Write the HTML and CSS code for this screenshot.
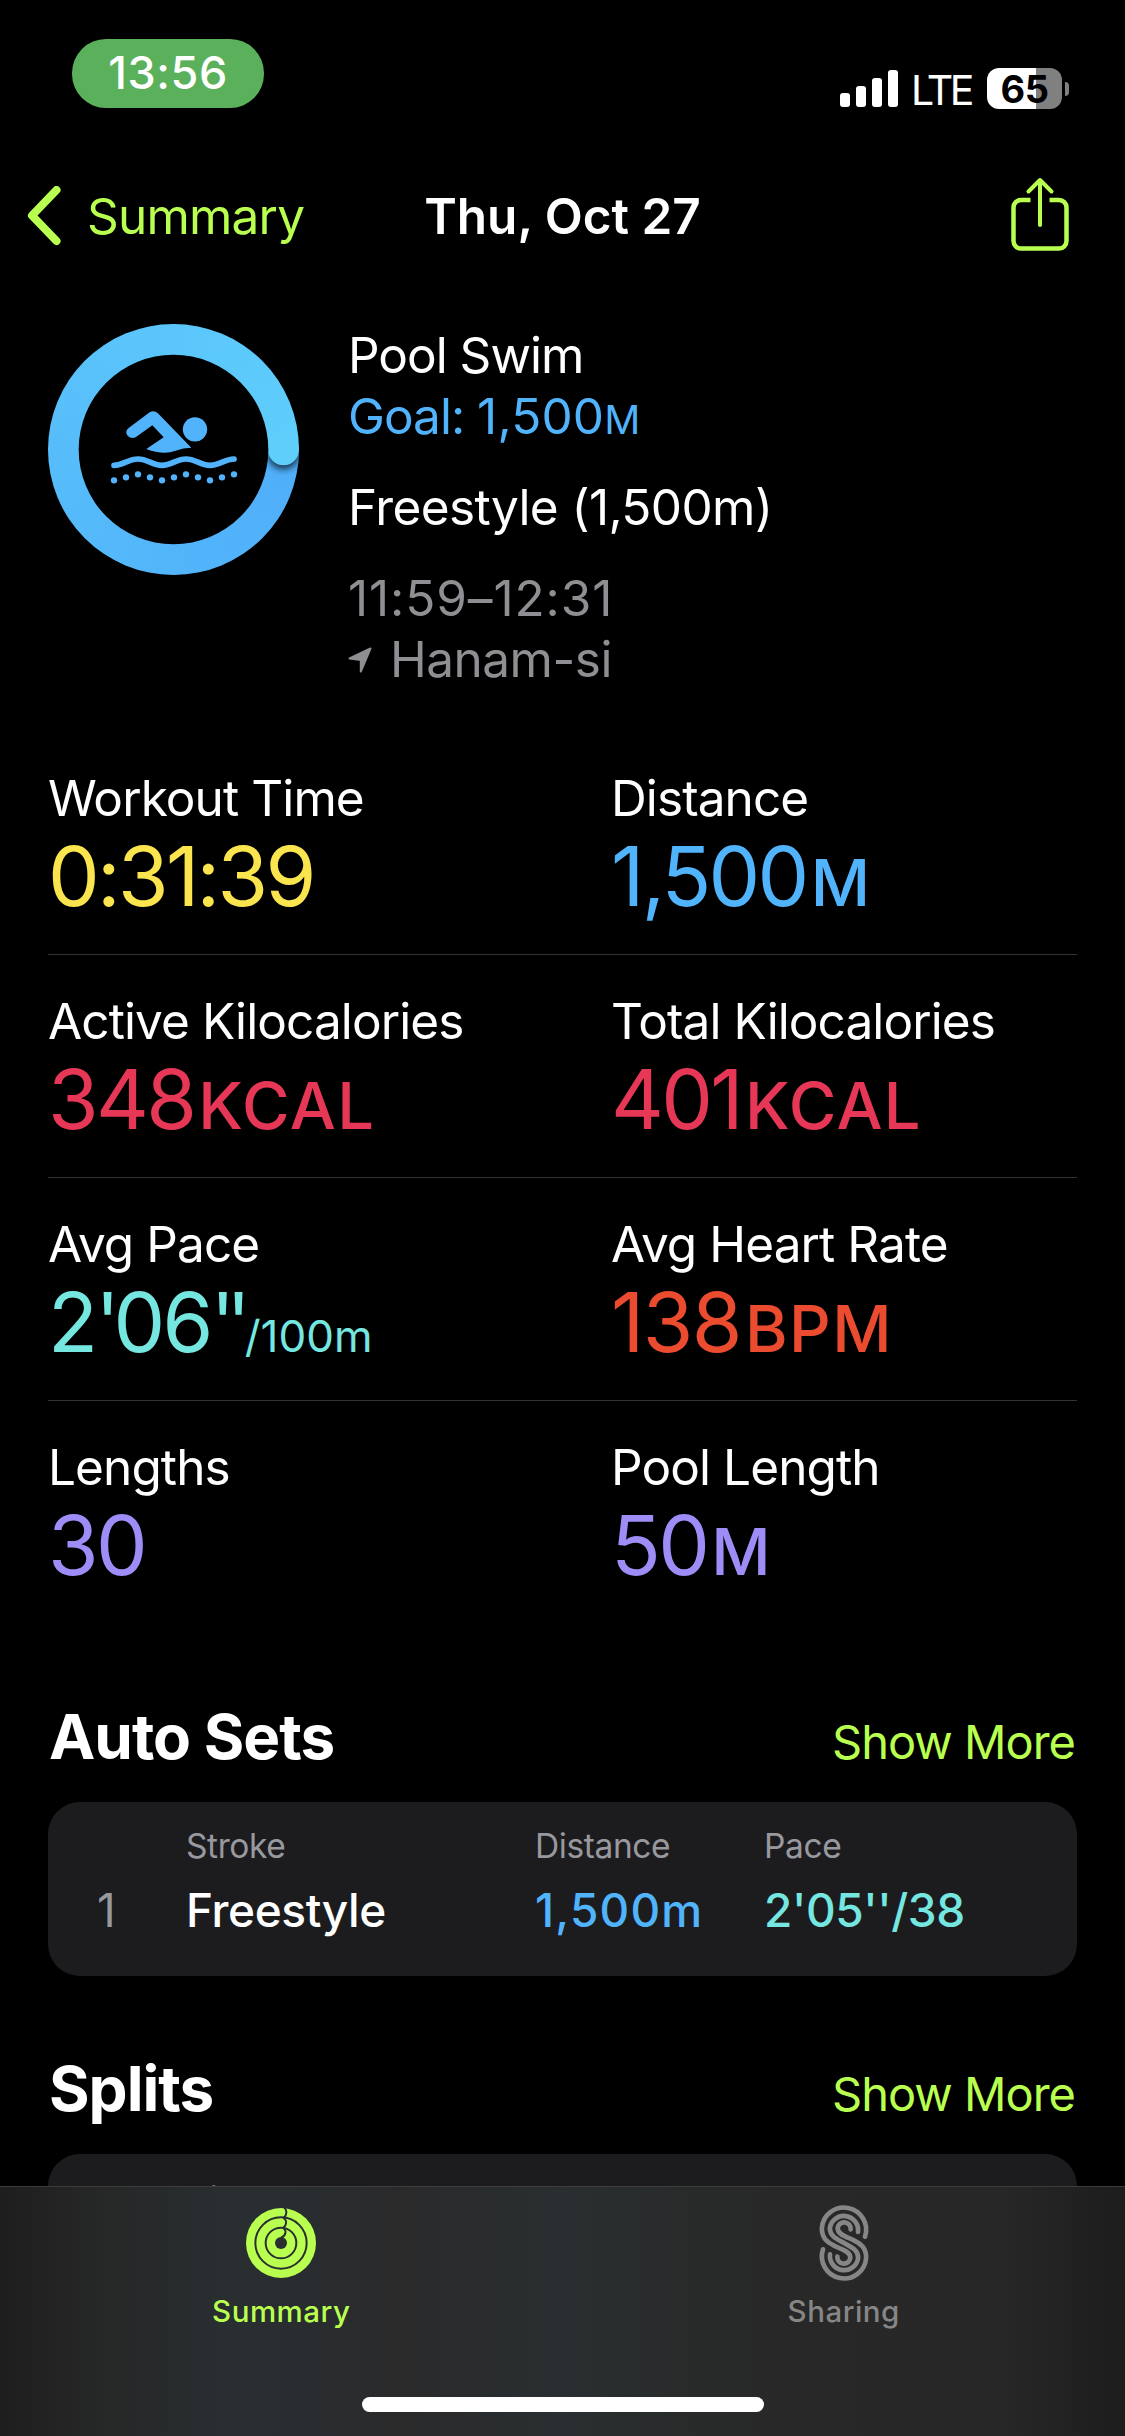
FILE: index.html
```
<!DOCTYPE html>
<html lang="en">
<head>
    <meta charset="UTF-8">
    <meta name="viewport" content="width=device-width, initial-scale=1.0">
    <title>Pool Swim</title>
    <link rel="stylesheet" href="styles.css">
</head>
<body>
    <div class="status-bar">
        <div class="time-pill">13:56</div>
        <div class="status-right">
            <svg class="signal" width="58" height="38" viewBox="0 0 58 38" fill="#fff">
                <rect x="0" y="23" width="10" height="14" rx="3"/>
                <rect x="16" y="16" width="10" height="21" rx="3"/>
                <rect x="32" y="8" width="10" height="29" rx="3"/>
                <rect x="48" y="0" width="10" height="37" rx="3"/>
            </svg>
            <span class="network">LTE</span>
            <div class="battery">65</div>
            <div class="battery-nub"></div>
        </div>
    </div>

    <div class="nav-bar">
        <a class="back">
            <svg width="36" height="60" viewBox="0 0 36 60" fill="none" stroke="#b9ff4f" stroke-width="8" stroke-linecap="round" stroke-linejoin="round">
                <path d="M29.500 4 5 29.500 29.500 55"/>
            </svg>
            <span>Summary</span>
        </a>
        <h1 class="nav-title">Thu, Oct 27</h1>
        <svg class="share" width="58" height="74" viewBox="0 0 58 74" fill="none" stroke="#b9ff4f" stroke-width="4.500" stroke-linecap="round" stroke-linejoin="round">
            <path stroke-linecap="butt" d="M19.500 23H10a7.500 7.500 0 0 0-7.500 7.500v33.500A7.500 7.500 0 0 0 10 71.500h38a7.500 7.500 0 0 0 7.500-7.500V30.500A7.500 7.500 0 0 0 48 23h-9.500"/>
            <path stroke-width="4" d="M29 48V3M17.500 14.500 29 3l11.500 11.500"/>
        </svg>
    </div>

    <div class="content">
        <div class="workout">
            <div class="ring">
                <svg width="251" height="251" viewBox="54 71 753 753">
                    <defs>
                        <clipPath id="lower"><rect x="700" y="448" width="120" height="150"/></clipPath>
                        <filter id="soft" x="-50%" y="-50%" width="200%" height="200%"><feGaussianBlur stdDeviation="10"/></filter>
                    </defs>
                    <g clip-path="url(#lower)">
                        <circle cx="760.500" cy="460" r="47" fill="#123" opacity=".85" filter="url(#soft)"/>
                    </g>
                    <circle cx="760.500" cy="448" r="46.500" fill="#5fcefb"/>
                    <circle cx="430.500" cy="447.500" r="284.500" fill="#000"/>
                    <!-- swimmer -->
                    <g fill="#50b3fb">
                        <circle cx="495" cy="387" r="36.500"/>
                        <path d="M296 383 357 337Q371 328 383 338L484 442Q460 442 437 451 400 466 349 446L401 411 367 375 317 411Q303 417 293 406 283 394 296 383Z"/>
                        <path fill="none" stroke="#50b3fb" stroke-width="17" stroke-linecap="round" d="M252 495C282 494 294 476 324 476S366 495 396 495 438 476 468 476 510 495 540 495 582 477 612 476"/>
                        <circle cx="252" cy="540" r="9.500"/>
                        <circle cx="288" cy="531" r="9.500"/>
                        <circle cx="324" cy="522" r="9.500"/>
                        <circle cx="360" cy="531" r="9.500"/>
                        <circle cx="396" cy="540" r="9.500"/>
                        <circle cx="432" cy="531" r="9.500"/>
                        <circle cx="468" cy="522" r="9.500"/>
                        <circle cx="504" cy="531" r="9.500"/>
                        <circle cx="540" cy="540" r="9.500"/>
                        <circle cx="576" cy="531" r="9.500"/>
                        <circle cx="612" cy="522" r="9.500"/>
                    </g>
                </svg>
            </div>
            <div class="info">
                <p>Pool Swim</p>
                <p class="goal">Goal: <span>1,500<small>M</small></span></p>
                <p class="stroke">Freestyle (1,500m)</p>
                <p class="muted time-range">11:59–12:31</p>
                <p class="muted place">
                    <svg width="24" height="26" viewBox="0 0 24 26" fill="#8e8e93" stroke="#8e8e93" stroke-width="2" stroke-linejoin="round"><path d="M1.500 11.500 22.500 1.500 12.800 24.500V13z"/></svg>
                    <span>Hanam-si</span>
                </p>
            </div>
        </div>

        <div class="stats">
            <div class="stat-row">
                <div class="stat"><div class="label">Workout Time</div><div class="value yellow">0:31:39</div></div>
                <div class="stat"><div class="label">Distance</div><div class="value blue">1,500<small>M</small></div></div>
            </div>
            <div class="stat-row">
                <div class="stat"><div class="label">Active Kilocalories</div><div class="value pink">348<small>KCAL</small></div></div>
                <div class="stat"><div class="label">Total Kilocalories</div><div class="value pink">401<small>KCAL</small></div></div>
            </div>
            <div class="stat-row">
                <div class="stat"><div class="label">Avg Pace</div><div class="value teal">2<span class="prime">'</span>06<span class="prime double">''</span><span class="per">/100m</span></div></div>
                <div class="stat"><div class="label">Avg Heart Rate</div><div class="value red heart">138<small>BPM</small></div></div>
            </div>
            <div class="stat-row">
                <div class="stat"><div class="label">Lengths</div><div class="value purple">30</div></div>
                <div class="stat"><div class="label">Pool Length</div><div class="value purple">50<small>M</small></div></div>
            </div>
        </div>

        <div class="section-head">
            <h2>Auto Sets</h2>
            <a>Show More</a>
        </div>
        <div class="card">
            <div class="card-row card-head"><span></span><span>Stroke</span><span>Distance</span><span>Pace</span></div>
            <div class="card-row card-body"><span class="num">1</span><span>Freestyle</span><span class="blue dist">1,500m</span><span class="teal">2'05''/38</span></div>
        </div>

        <div class="section-head">
            <h2>Splits</h2>
            <a>Show More</a>
        </div>
        <div class="card splits">
            <div class="card-row card-head"><span></span><span>Distance</span><span>Pace</span></div>
        </div>
    </div>

    <div class="tab-bar">
        <div class="tabs">
            <a class="tab active">
                <svg width="110" height="86" viewBox="-9 30 330 258">
                    <circle cx="156" cy="159" r="105" fill="#b9ff4f"/>
                    <g fill="none" stroke="#292e31" stroke-width="6">
                        <circle cx="156" cy="159" r="77"/>
                        <circle cx="156" cy="159" r="46"/>
                        <path d="M164 50C175 60 175 74 164 83 174 92 174 104 163 113 173 122 172 137 156 143"/>
                    </g>
                    <circle cx="156" cy="159" r="18" fill="#292e31"/>
                </svg>
                <span>Summary</span>
            </a>
            <a class="tab">
                <svg width="110" height="86" viewBox="-5 30 330 258" fill="none" stroke="#868686" stroke-width="14" stroke-linecap="round">
                    <path d="M223 140A66.500 66.500 0 1 0 93.500 115C93.500 145 110 157 130 167 150 177 179 183 179 203A19.500 19.500 0 1 1 140 200"/>
                    <path d="M202 126A42.500 42.500 0 1 0 117.500 115C117.500 137 135 146 160 159 185 172 202.500 181 202.500 203A42.500 42.500 0 1 1 118 193"/>
                    <path d="M180 118A19.500 19.500 0 1 0 141 115C141 135 170 141 190 151 210 161 226.500 173 226.500 203A66.500 66.500 0 1 1 97 178"/>
                </svg>
                <span>Sharing</span>
            </a>
        </div>
        <div class="home-indicator"></div>
    </div>
</body>
</html>
```
FILE: styles.css
```
* {
    box-sizing: border-box;
    margin: 0;
    padding: 0;
}

body {
    width: 1125px;
    height: 2436px;
    overflow: hidden;
    background-color: #000;
    color: #fff;
    font-family: Inter, "Liberation Sans", sans-serif;
    font-size: 49.5px;
}

svg {
    display: block;
    flex-shrink: 0;
}

h1, h2 {
    font-size: inherit;
}

small {
    line-height: 0;
}

/* Status bar */
.status-bar {
    display: flex;
    justify-content: space-between;
    height: 132px;
    padding: 39px 56px 0 72px;
}

.time-pill {
    width: 192px;
    height: 69px;
    border-radius: 34px;
    background-color: #5bb15b;
    font-size: 45px;
    font-weight: 500;
    letter-spacing: 0.6px;
    line-height: 68px;
    text-align: center;
}

.status-right {
    display: flex;
    align-items: center;
    height: 99px;
}

.network {
    width: 73px;
    margin-left: 13px;
    font-size: 41px;
    letter-spacing: -3.5px;
    padding-top: 2px;
}

.battery {
    width: 75px;
    height: 41px;
    margin-left: 3px;
    border-radius: 12px;
    background: linear-gradient(to right, #fff 49px, #808080 49px);
    color: #000;
    font-size: 38px;
    font-weight: 700;
    letter-spacing: -0.5px;
    line-height: 42px;
    text-align: center;
}

.battery-nub {
    width: 4px;
    height: 14px;
    margin-left: 3px;
    border-radius: 0 5px 5px 0;
    background-color: #808080;
}

/* Navigation */
.nav-bar {
    display: grid;
    grid-template-columns: 1fr auto 1fr;
    align-items: center;
    height: 168px;
    padding: 0 56px 0 27px;
}

.back {
    display: flex;
    align-items: center;
    gap: 24px;
    color: #b9ff4f;
    letter-spacing: -0.8px;
}

.nav-title {
    padding-left: 29px;
    font-weight: 600;
}

.share {
    justify-self: end;
    margin-top: -5px;
}

/* Workout summary */
.content {
    padding: 24px 48px 0;
}

.workout {
    display: flex;
    gap: 49px;
}

.ring {
    width: 251px;
    height: 251px;
    border-radius: 50%;
    overflow: hidden;
    background: conic-gradient(from 90deg, #50aef9, #52b5fa 25%, #57bdfa 50%, #5bc6fb 75%, #5fcefb);
}

.info {
    padding-top: 1px;
    line-height: 61px;
    letter-spacing: -1px;
}

.goal {
    color: #50b3fb;
}

.goal span {
    letter-spacing: 0.2px;
}

.goal small {
    font-size: 40px;
}

.stroke {
    margin: 30px 0;
    letter-spacing: -0.6px;
}

.muted {
    color: #8e8e93;
}

.time-range {
    letter-spacing: 0.9px;
}

.place {
    display: flex;
    align-items: center;
    gap: 18px;
    letter-spacing: -0.5px;
}

/* Stats */
.stats {
    margin-top: 42px;
}

.stat-row {
    display: grid;
    grid-template-columns: 563px 1fr;
    padding: 36px 0 33px;
    border-bottom: 1px solid #333335;
}

.stat-row:last-child {
    border-bottom: none;
}

.label {
    line-height: 60px;
    letter-spacing: -0.9px;
    margin-bottom: 3px;
}

.value {
    height: 90px;
    font-size: 82px;
    line-height: 92px;
    letter-spacing: -2.7px;
    white-space: nowrap;
}

.value small {
    font-size: 65px;
    font-weight: 500;
    letter-spacing: 1.4px;
    margin-left: 4px;
}

.value.heart {
    letter-spacing: -1.6px;
}

.value .prime {
    letter-spacing: -6.5px;
}

.value .prime.double {
    letter-spacing: -9px;
}

.value .per {
    margin-left: 3px;
    font-size: 44px;
    line-height: 0;
    letter-spacing: 0;
}

.yellow { color: #fae54f; }
.blue { color: #50b3fb; }
.pink { color: #e63757; }
.teal { color: #75e6e0; }
.red { color: #eb4c30; }
.purple { color: #9e8df7; }

/* Sections */
.section-head {
    display: flex;
    justify-content: space-between;
    align-items: baseline;
    height: 76px;
    margin: 76px 2px 27px 1px;
}

.section-head h2 {
    font-size: 62px;
    font-weight: 700;
    line-height: 76px;
    letter-spacing: -1px;
}

.section-head a {
    color: #b9ff4f;
    font-size: 47px;
    line-height: 60px;
    letter-spacing: -1px;
}

.card {
    height: 174px;
    padding: 24px 0 0 49px;
    border-radius: 32px;
    background-color: #1c1c1e;
}

.card + .section-head {
    margin-top: 75px;
}

.card-row {
    display: grid;
    grid-template-columns: 89px 349px 229px 1fr;
}

.card-head {
    color: #98989f;
    font-size: 33.5px;
    line-height: 40px;
    letter-spacing: -0.4px;
    margin-bottom: 16px;
}

.card-body {
    font-size: 46px;
    font-weight: 500;
    line-height: 56px;
    letter-spacing: -0.4px;
}

.card-body .dist {
    letter-spacing: 1.2px;
}

.num {
    color: #98989f;
    font-weight: 400;
}

.splits {
    padding-top: 25px;
}

.splits .card-row {
    grid-template-columns: 89px 289px 1fr;
}

/* Tab bar */
.tab-bar {
    position: fixed;
    left: 0;
    bottom: 0;
    width: 1125px;
    height: 250px;
    border-top: 1px solid #3c3c3e;
    background: linear-gradient(to right, #1e1e1e 0, #272828 110px, #292e31 230px, #292d30 290px, #2a2a2b 400px, #292e30 560px, #292b2b 680px, #282828 780px, #272727 1000px, #1d1d1d 1125px);
}

.tabs {
    display: grid;
    grid-template-columns: 1fr 1fr;
}

.tab {
    display: flex;
    flex-direction: column;
    align-items: center;
    padding-top: 13px;
    color: #868686;
    font-size: 29.5px;
    font-weight: 500;
    line-height: 40px;
    letter-spacing: 0.5px;
}

.tab span {
    margin-top: 5px;
}

.tab.active {
    color: #b9ff4f;
}

.home-indicator {
    width: 402px;
    height: 15px;
    margin: 66px auto 0;
    border-radius: 8px;
    background-color: #fff;
}
```
